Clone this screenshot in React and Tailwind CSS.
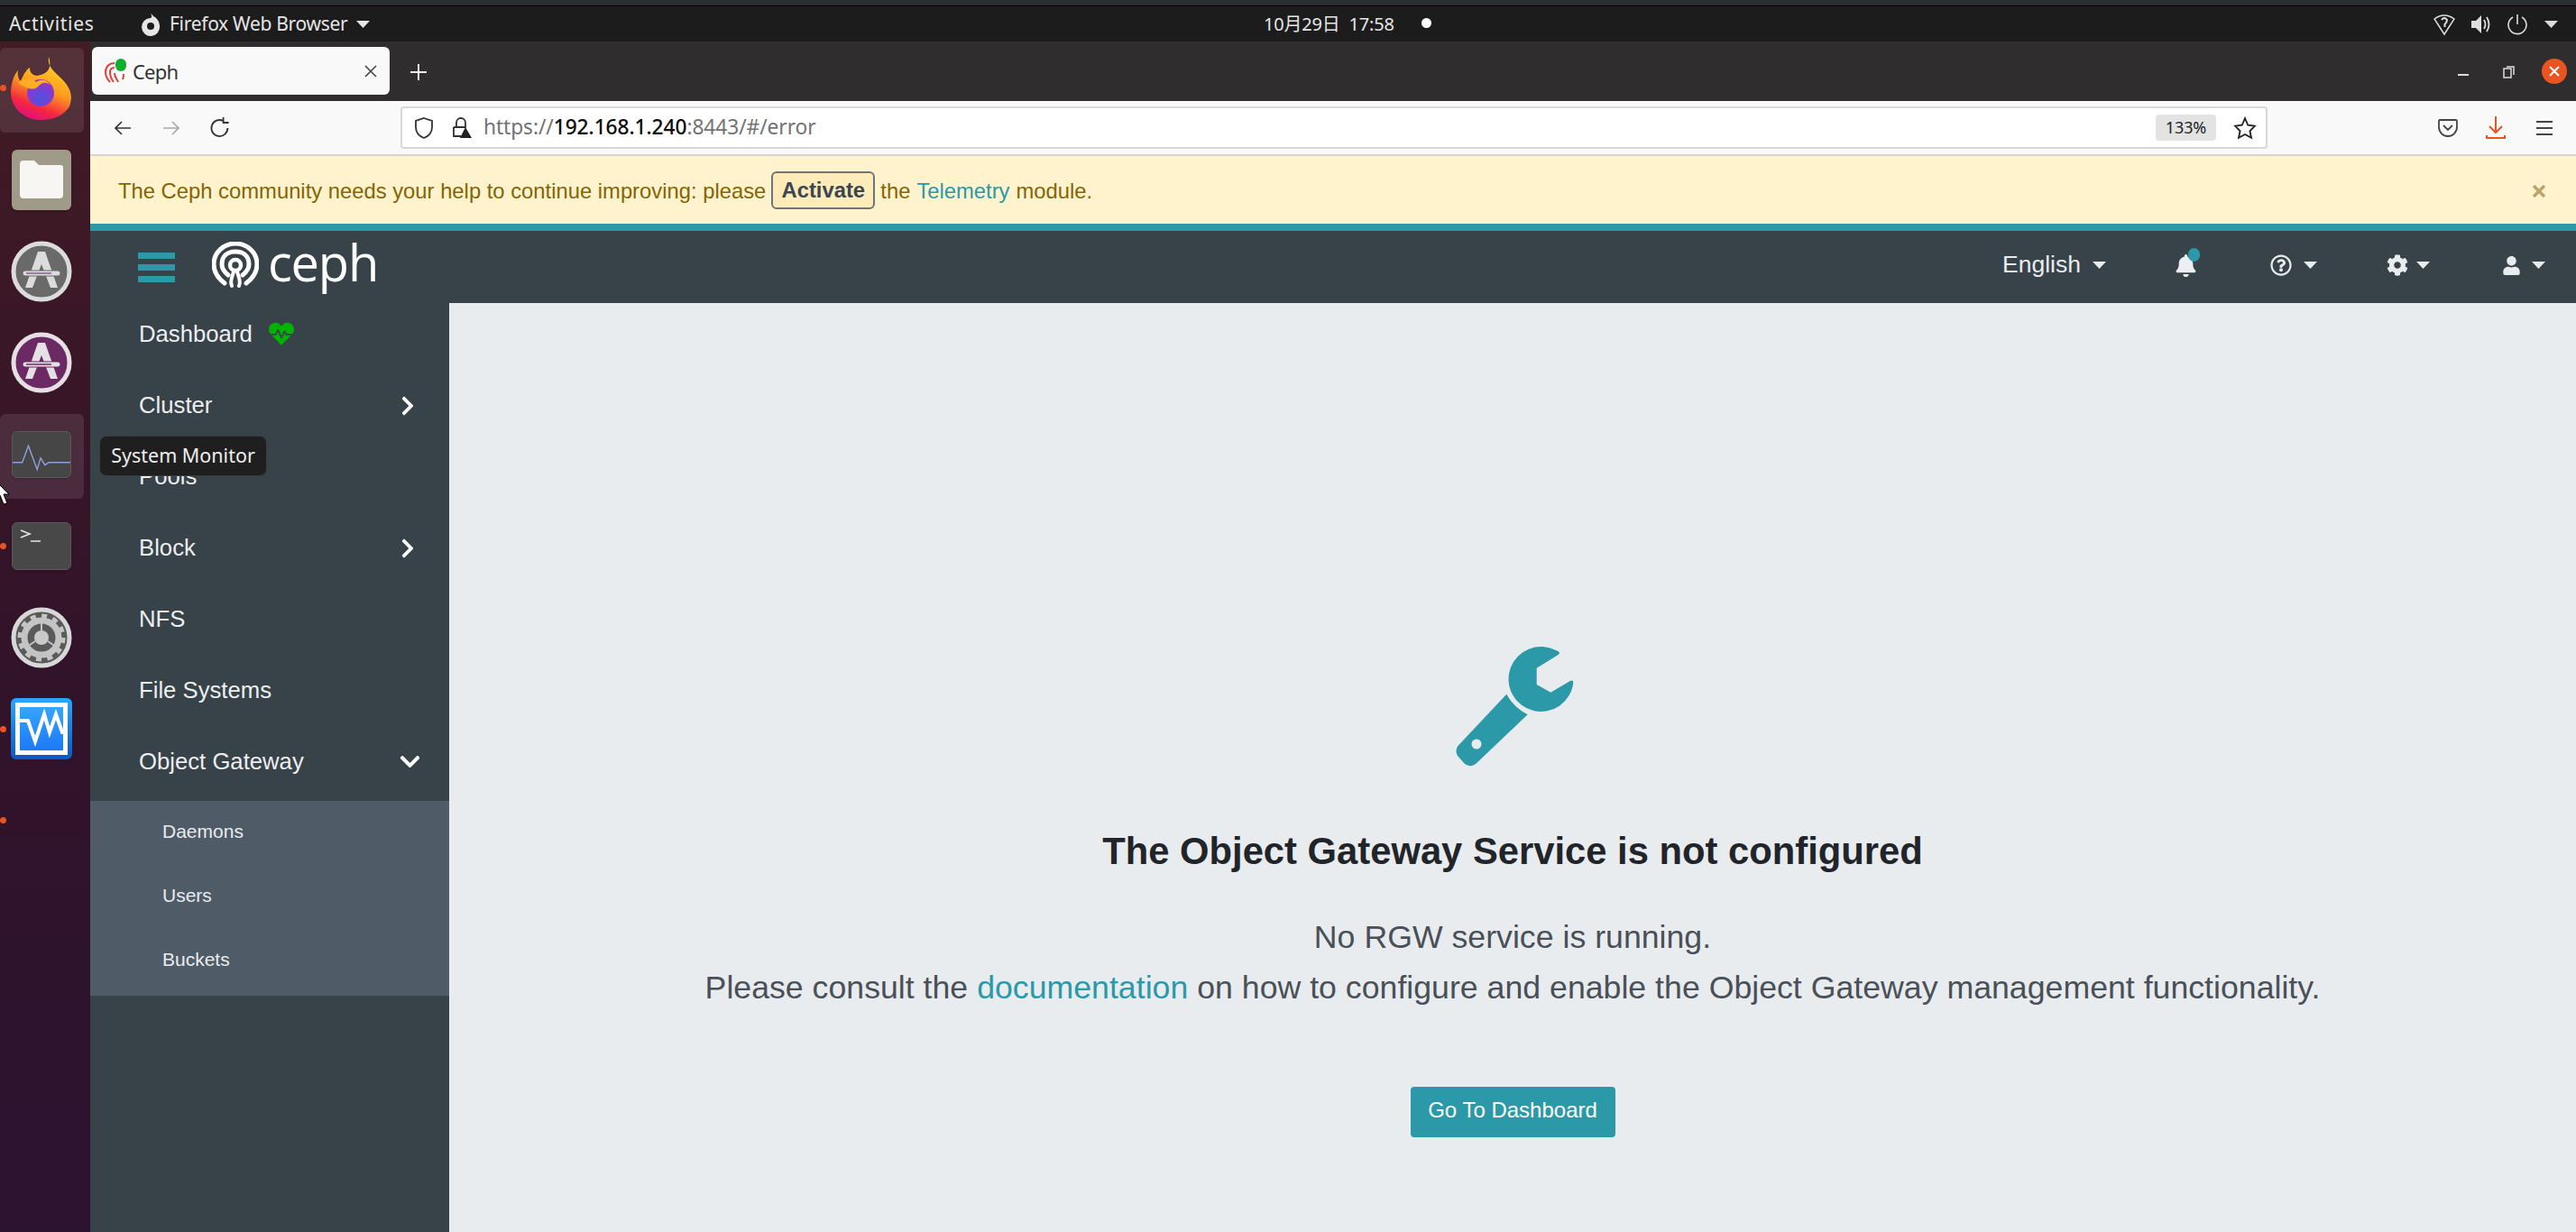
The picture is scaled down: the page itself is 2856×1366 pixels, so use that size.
import React from "react";
import { FaChevronRight, FaChevronDown, FaBell, FaCog, FaUser, FaHeartbeat, FaRegQuestionCircle } from "react-icons/fa";

const Caret = ({ cls = "" }) => (
  <svg width="15" height="8" viewBox="0 0 15 8" className={cls}><path d="M0 0H15L7.5 8Z" fill="currentColor" /></svg>
);

const FirefoxLogo = () => (
  <svg width="70" height="72" viewBox="0 0 70 72">
    <defs>
      <linearGradient id="ffa" x1="0.75" y1="0" x2="0.35" y2="1"><stop offset="0" stopColor="#ffe226" /><stop offset="0.5" stopColor="#ff9a1f" /><stop offset="0.8" stopColor="#f5263f" /><stop offset="1" stopColor="#e0107f" /></linearGradient>
      <radialGradient id="ffb" cx="0.5" cy="0.7" r="0.7"><stop offset="0" stopColor="#4b52e0" /><stop offset="1" stopColor="#a030c8" /></radialGradient>
    </defs>
    <path d="M43 1C41 12 50 18 58 26C68 36 70 46 66 56C60 66 48 71 34 71C16 71 2 58 1 42C1 30 5 20 9 16C8 22 10 26 12 28C16 18 20 14 22 13C22 18 24 21 30 22C42 20 47 14 43 1Z" fill="url(#ffa)" />
    <circle cx="34" cy="41" r="15" fill="url(#ffb)" />
    <path d="M9 30C14 24 24 24 29 29C35 25 42 27 44 32C39 28 35 30 31 34C26 39 18 36 9 30Z" fill="#ffae22" />
  </svg>
);

const FilesIcon = () => (
  <div className="relative w-[66px] h-[67px] rounded-md bg-[#a09a88] flex items-center justify-center shadow">
    <svg width="48" height="42" viewBox="0 0 48 42"><path d="M0 4Q0 0 4 0H16L21 5H45Q48 5 48 8V38Q48 42 44 42H4Q0 42 0 38Z" fill="#f8f6f3" /></svg>
  </div>
);

const SoftwareIcon = ({ ring, fill, cross }) => (
  <svg width="68" height="68" viewBox="0 0 68 68">
    <circle cx="34" cy="34" r="31" fill={fill} stroke={ring} strokeWidth="5" />
    <path d="M30 12H38L52 52H44L34 26L24 52H16Z" fill={ring} />
    <rect x="13" y="33" width="42" height="6" rx="3" fill={ring} stroke={fill} strokeWidth="1" />
    <path d="M17 36H45" stroke={cross} strokeWidth="1.5" />
  </svg>
);

const MonitorIcon = () => (
  <div className="w-[66px] h-[52px] rounded-md bg-[#464646] border border-[#5a5a5a] shadow flex items-center">
    <svg width="66" height="40" viewBox="0 0 66 40"><path d="M0 29H11L18 10L28 37L32 24L37 32L41 29H66" fill="none" stroke="#8f9fdc" strokeWidth="1.5" /></svg>
  </div>
);

const TerminalIcon = () => (
  <div className="w-[66px] h-[53px] rounded-md bg-[#484848] border border-[#5a5a5a] shadow flex items-start">
    <svg width="40" height="30" viewBox="0 0 40 30"><path d="M9 8L19 12L9 16M20 20H31" fill="none" stroke="#e6e6e6" strokeWidth="1.6" /></svg>
  </div>
);

const SettingsIcon = () => (
  <svg width="68" height="68" viewBox="0 0 68 68">
    <circle cx="34" cy="34" r="31" fill="#5a5a5a" stroke="#d8d8d8" strokeWidth="5" />
    <circle cx="34" cy="34" r="19" fill="none" stroke="#c4c4c4" strokeWidth="7" />
    <circle cx="34" cy="34" r="24" fill="none" stroke="#c4c4c4" strokeWidth="5" strokeDasharray="6 6.5" />
    <circle cx="34" cy="34" r="8" fill="#c9c9c9" />
    <path d="M34 15V26M18 44L27 38M50 44L41 38" stroke="#c4c4c4" strokeWidth="2" />
  </svg>
);

const BlueMonitor = () => (
  <div className="w-[68px] h-[68px] rounded-md bg-gradient-to-b from-[#2fa5ff] to-[#0a58c8] p-[5px]">
    <div className="w-full h-full border-[5px] border-white bg-gradient-to-b from-[#35a6ff] to-[#1f78f5]">
      <svg width="48" height="48" viewBox="0 0 48 48"><path d="M0 15H9L17 38L27 8L33 28L40 8L47 28H52" fill="none" stroke="#fff" strokeWidth="4" /></svg>
    </div>
  </div>
);

const CephMark = ({ color = "#fff", size = 52 }) => (
  <svg width={size} height={size} viewBox="0 0 52 52" fill="none" stroke={color} strokeWidth="5" strokeLinecap="round">
    <path d="M14 46C6 40 2 33 2 25C2 12 13 2 26 2C39 2 50 12 50 25C50 33 46 40 38 46" />
    <path d="M18 37C13 33 11 29 11 25C11 16 17 11 26 11C35 11 41 16 41 25C41 29 39 33 34 37" />
    <circle cx="26" cy="26" r="6" strokeWidth="4.5" />
    <path d="M24 32C24 38 19 42 22 49M28 32C28 38 33 42 30 49" strokeWidth="4" />
  </svg>
);

const Wrench = () => (
  <svg width="150" height="150" viewBox="0 0 150 150" className="-ml-[3px]">
    <path fill="#2b99a8" d="M127 16.7L102.7 31.7V50L118.3 58.7L139 46.5Q143.5 44 143.3 48A36 36 0 1 1 124 12Q130 14 127 16.7Z" />
    <path fillRule="evenodd" fill="#2b99a8" d="M69.3 60.7Q77 75 92.7 83.3L38.3 135Q33 141 28.3 140Q26 140 23 138L15 129Q12 124 15 118.5ZM36 110.5A5.5 5.5 0 1 0 36 121.5A5.5 5.5 0 1 0 36 110.5Z" />
  </svg>
);

const DockSlot = ({ dot, active, children }) => (
  <div className="relative h-[101.5px] w-full flex items-center justify-center shrink-0 pr-[8px]">
    {active && <div className="absolute left-0 top-[6px] w-[93px] h-[94px] rounded-md bg-white/10" />}
    {dot && <div className="absolute left-0 top-[47px] w-[7px] h-[7px] rounded-full bg-[#e95420]" />}
    <div className="relative">{children}</div>
  </div>
);

const NavRow = ({ label, icon, extra, first }) => (
  <div className={`flex items-center justify-between h-[79px] pl-[54px] text-[25.7px] text-[#eceeef] shrink-0 ${first ? "-mt-[5px]" : ""}`}>
    <div className="flex items-center gap-[18px]">
      <span>{label}</span>
      {extra}
    </div>
    {icon}
  </div>
);

const SubRow = ({ label }) => (
  <div className="flex items-center h-[71px] pb-[3px] pl-[80px] text-[21px] text-[#e9ecef]">{label}</div>
);

export default function App() {
  return (
    <div className="relative w-[2856px] h-[1366px] overflow-hidden flex flex-col bg-[#2c1229] font-['Liberation_Sans',sans-serif]">
      {/* GNOME top bar */}
      <div className="h-[6px] bg-[#2c2f31] shrink-0" />
      <div className="h-[40px] bg-[#1c1c1c] border-t border-black shrink-0 flex items-center pl-[10px] pr-[20px] text-[#e6e6e6] text-[21px] font-['Noto_Sans','Noto_Sans_CJK_SC',sans-serif] relative">
        <span className="w-[145px] tracking-[0.7px]">Activities</span>
        <div className="flex items-center w-[1246px]">
          <svg width="24" height="26" viewBox="0 0 24 26" className="mr-[9px]"><path d="M12 1C14 4 13 5 12 6A10 10 0 1 0 22 15C22 10 19 6 15 4Q14 2 12 1Z" fill="#e6e6e6" /><circle cx="12" cy="15" r="4" fill="#1c1c1c" /></svg>
          <span className="tracking-[-0.3px]">Firefox Web Browser</span>
          <Caret cls="ml-[10px] text-[#e6e6e6]" />
        </div>
        <span className="text-[20px] tracking-[-0.2px]">10月29日&nbsp;&nbsp;17:58</span>
        <div className="ml-[30px] w-[11px] h-[11px] rounded-full bg-white -mt-[3px]" />
        <div className="ml-auto flex items-center gap-[17px]">
          <svg width="24" height="26" viewBox="0 0 24 26" fill="none" stroke="#ddd" strokeWidth="1.5"><path d="M1 7Q12 -1 23 7L12 24Z" /><path d="M9 8Q12 4 15 8Q15 11 12.5 13V16" strokeWidth="2" /></svg>
          <svg width="24" height="24" viewBox="0 0 24 24" fill="#ddd"><path d="M1 8H6L12 2V22L6 16H1Z" /><path d="M15 7Q18 12 15 17M18 4Q23 12 18 20" fill="none" stroke="#ddd" strokeWidth="1.8" /></svg>
          <svg width="22" height="24" viewBox="0 0 22 24" fill="none" stroke="#ddd" strokeWidth="1.6"><path d="M11 1V12M6 4A10 10 0 1 0 16 4" /></svg>
          <Caret cls="text-[#ddd] ml-[2px]" />
        </div>
      </div>

      <div className="flex flex-1 min-h-0">
        {/* Dock */}
        <div className="w-[100px] shrink-0 pt-[1px] flex flex-col bg-gradient-to-b from-[#421b24] via-[#321329] to-[#2c1330]">
          <DockSlot dot active><FirefoxLogo /></DockSlot>
          <DockSlot><FilesIcon /></DockSlot>
          <DockSlot><SoftwareIcon ring="#dcdcdc" fill="#6a6a6a" cross="#8e5a9e" /></DockSlot>
          <DockSlot><SoftwareIcon ring="#e6dfe4" fill="#6b2a63" cross="#6b2a63" /></DockSlot>
          <DockSlot active><MonitorIcon /></DockSlot>
          <DockSlot dot><TerminalIcon /></DockSlot>
          <DockSlot><SettingsIcon /></DockSlot>
          <DockSlot dot><BlueMonitor /></DockSlot>
          <DockSlot dot />
        </div>

        {/* Firefox window */}
        <div className="flex-1 min-w-0 flex flex-col">
          {/* Tab strip */}
          <div className="h-[66px] shrink-0 bg-[#2f2d2e] flex items-start relative">
            <div className="ml-[2px] mt-[6px] w-[330px] h-[53px] rounded-md bg-[#f9f9fa] flex items-center pl-[14px] pr-[14px]">
              <div className="relative w-[24px] h-[28px] mr-[7px]">
                <svg width="22" height="26" viewBox="0 0 22 26" fill="none" stroke="#e0403a" strokeWidth="2" className="absolute left-0 top-[3px]"><path d="M6 23C2 19 1 15 1 12C1 6 5 2 11 2M10 23C7 19 6 16 6 12C6 9 8 7 11 7M15 23C14 20 11 18 11 13M20 20C21 18 21 16 21 14" /></svg>
                <div className="absolute right-0 top-0 w-[12px] h-[14px] rounded-full bg-[#0cb02b]" />
              </div>
              <span className="text-[22px] text-[#333] font-['Noto_Sans',sans-serif] tracking-[-0.8px] mt-[2px]">Ceph</span>
              <svg width="14" height="14" viewBox="0 0 14 14" className="ml-auto" stroke="#444" strokeWidth="1.6"><path d="M1 1L13 13M13 1L1 13" /></svg>
            </div>
            <svg width="18" height="18" viewBox="0 0 18 18" stroke="#eee" strokeWidth="2" className="ml-[23px] mt-[25px]"><path d="M9 0V18M0 9H18" /></svg>
            <div className="ml-auto mr-[10px] mt-[19px] flex items-center">
              <div className="w-[12px] h-[2px] bg-[#ddd] mt-[8px] mr-[38px]" />
              <svg width="13" height="15" viewBox="0 0 13 15" fill="none" stroke="#ddd" strokeWidth="1.5" className="mr-[30px]"><rect x="1" y="4" width="8" height="10" /><path d="M4 2H12V11" /></svg>
              <div className="w-[28px] h-[28px] rounded-full bg-[#e95420] flex items-center justify-center">
                <svg width="12" height="12" viewBox="0 0 12 12" stroke="#fff" strokeWidth="2"><path d="M1 1L11 11M11 1L1 11" /></svg>
              </div>
            </div>
          </div>

          {/* URL toolbar */}
          <div className="h-[61px] shrink-0 bg-[#f9f9fa] border-b-2 border-[#d4d4d6] flex items-center pl-[26px] pr-[24px] text-[#3a3a3d]">
            <svg width="20" height="20" viewBox="0 0 20 20" fill="none" stroke="#333" strokeWidth="1.7"><path d="M19 10H2M9 3L2 10L9 17" /></svg>
            <svg width="20" height="20" viewBox="0 0 20 20" fill="none" stroke="#a8a8aa" strokeWidth="1.7" className="ml-[34px]"><path d="M1 10H18M11 3L18 10L11 17" /></svg>
            <svg width="24" height="24" viewBox="0 0 20 20" fill="none" stroke="#333" strokeWidth="1.5" className="ml-[32px]"><path d="M17 10A7.5 7.5 0 1 1 13 3.4M13 0V5H18" /></svg>
            <div className="ml-[188px] w-[2071px] h-[47px] bg-white rounded border-2 border-[#d8d8da] flex items-center pl-[14px] pr-[7px] text-[22.8px] font-['Noto_Sans',sans-serif] tracking-[-0.1px]">
              <svg width="20" height="24" viewBox="0 0 20 24" fill="none" stroke="#333" strokeWidth="1.8"><path d="M10 1L19 4V11C19 17 15 21 10 23C5 21 1 17 1 11V4Z" /></svg>
              <svg width="24" height="24" viewBox="0 0 24 24" className="ml-[19px]"><path d="M4 11V21H12M7 11V6A5 5 0 0 1 17 6V11H4" fill="none" stroke="#333" strokeWidth="1.8" /><path d="M17 11L24 23H11Z" fill="#222" /></svg>
              <span className="ml-[13px] text-[#737373]">https://</span>
              <span className="text-[#0c0c0d] font-medium">192.168.1.240</span>
              <span className="text-[#737373]">:8443/#/error</span>
              <div className="ml-auto mr-[19px] w-[67px] h-[29px] rounded bg-[#e3e3e4] flex items-center justify-center text-[18px] text-[#222]">133%</div>
              <svg width="26" height="26" viewBox="0 0 24 24" fill="none" stroke="#222" strokeWidth="1.7" className="mr-[3px]"><path d="M12 2L15 9L22 9.8L17 15L18.5 22L12 18.5L5.5 22L7 15L2 9.8L9 9Z" /></svg>
            </div>
            <svg width="24" height="24" viewBox="0 0 24 24" fill="none" stroke="#444" strokeWidth="1.8" className="ml-[188px]"><path d="M3 3H21Q22 3 22 5V11A10 10 0 0 1 2 11V5Q2 3 3 3ZM7 9L12 14L17 9" /></svg>
            <svg width="24" height="28" viewBox="0 0 24 28" fill="none" stroke="#e95420" strokeWidth="2" className="ml-[29px]"><path d="M12 1V19M5 12L12 19L19 12M2 22V25H22V22" /></svg>
            <svg width="22" height="20" viewBox="0 0 22 20" stroke="#444" strokeWidth="2.2" className="ml-[31px]"><path d="M2 3H20M2 10H20M2 17H20" /></svg>
          </div>

          {/* Telemetry banner */}
          <div className="h-[75px] shrink-0 bg-[#fff3cd] flex items-center pl-[31px] pr-[34px] pt-[2px] text-[23.8px] text-[#856404]">
            <span>The Ceph community needs your help to continue improving: please</span>
            <span className="ml-[6px] w-[115px] h-[42px] -mt-[2px] rounded-md border-2 border-[#6c757d] bg-[#fdebb9] flex items-center justify-center font-bold text-[#3c4650]">Activate</span>
            <span className="ml-[6px]">the</span>
            <span className="ml-[7px] text-[#2b99a8]">Telemetry</span>
            <span className="ml-[7px]">module.</span>
            <svg width="14" height="14" viewBox="0 0 14 14" stroke="#b9a66a" strokeWidth="3.5" className="ml-auto"><path d="M1 1L13 13M13 1L1 13" /></svg>
          </div>
          <div className="h-[8px] shrink-0 bg-[#2b99a8]" />

          {/* Ceph navbar */}
          <div className="h-[80px] shrink-0 bg-[#374249] flex items-center pl-[53px] pr-[34px] text-[#e9ecef]">
            <div className="w-[41px] flex flex-col gap-[6px]">
              <div className="h-[7px] bg-[#2b99a8]" />
              <div className="h-[7px] bg-[#2b99a8]" />
              <div className="h-[7px] bg-[#2b99a8]" />
            </div>
            <div className="ml-[41px] -mt-[4px]"><CephMark /></div>
            <span className="ml-[10px] text-[56px] leading-none text-white font-medium font-['Open_Sans',sans-serif] -mt-[12px] tracking-[-1.2px]">ceph</span>
            <div className="ml-auto flex items-center text-[26.5px] -mt-[4px]">
              <span>English</span>
              <Caret cls="ml-[13px]" />
              <div className="relative ml-[76px]">
                <FaBell size={25} className="text-[#eceff1]" />
                <div className="absolute -right-[3px] -top-[7px] w-[13px] h-[15px] rounded-full bg-[#2b99a8]" />
              </div>
              <FaRegQuestionCircle size={24} className="ml-[81px]" />
              <Caret cls="ml-[13px]" />
              <FaCog size={24} className="ml-[77px]" />
              <Caret cls="ml-[9px]" />
              <FaUser size={21} className="ml-[80px]" />
              <Caret cls="ml-[12px]" />
            </div>
          </div>

          {/* Sidebar + content */}
          <div className="flex-1 min-h-0 flex">
            <div className="w-[398px] shrink-0 bg-[#374249] overflow-hidden flex flex-col">
              <NavRow first label="Dashboard" extra={<FaHeartbeat size={28} className="text-[#00b300]" />} />
              <NavRow label="Cluster" icon={<FaChevronRight size={24} className="text-white mr-[34px]" />} />
              <NavRow label="Pools" />
              <NavRow label="Block" icon={<FaChevronRight size={24} className="text-white mr-[34px]" />} />
              <NavRow label="NFS" />
              <NavRow label="File Systems" />
              <NavRow label="Object Gateway" icon={<FaChevronDown size={25} className="text-white mr-[31px]" />} />
              <div className="mt-[4px] bg-[#4f5b66] pb-[3px]">
                <SubRow label="Daemons" />
                <SubRow label="Users" />
                <SubRow label="Buckets" />
              </div>
            </div>
            <div className="flex-1 min-w-0 bg-[#e9ecef] flex flex-col items-center pt-[373px]">
              <Wrench />
              <h1 className="mt-[60px] text-[41.75px] font-bold text-[#212529] leading-[50px]">The Object Gateway Service is not configured</h1>
              <p className="mt-[42px] text-[35.7px] text-[#495057] leading-[56px] text-center">
                No RGW service is running.<br />
                Please consult the <span className="text-[#2b99a8]">documentation</span> on how to configure and enable the Object Gateway management functionality.
              </p>
              <div className="mt-[82px] w-[227px] h-[56px] rounded bg-[#2b99a8] flex items-center justify-center pb-[4px] text-[24px] text-white">Go To Dashboard</div>
            </div>
          </div>
        </div>
      </div>

      {/* Dock tooltip over page */}
      <div className="absolute left-[110px] top-[483px] w-[186px] h-[45px] rounded-lg bg-[#1f1f1f] border border-[#3c3c3c] flex items-center justify-center text-[21.5px] text-[#eeeeee] font-['Noto_Sans',sans-serif]">System Monitor</div>
      <svg width="12" height="26" viewBox="0 0 12 26" className="absolute left-0 top-[535px]"><path d="M-3 0L10 13H4L8 23L4 24L0 14L-3 18Z" fill="#fff" stroke="#000" strokeWidth="1" /></svg>
    </div>
  );
}
